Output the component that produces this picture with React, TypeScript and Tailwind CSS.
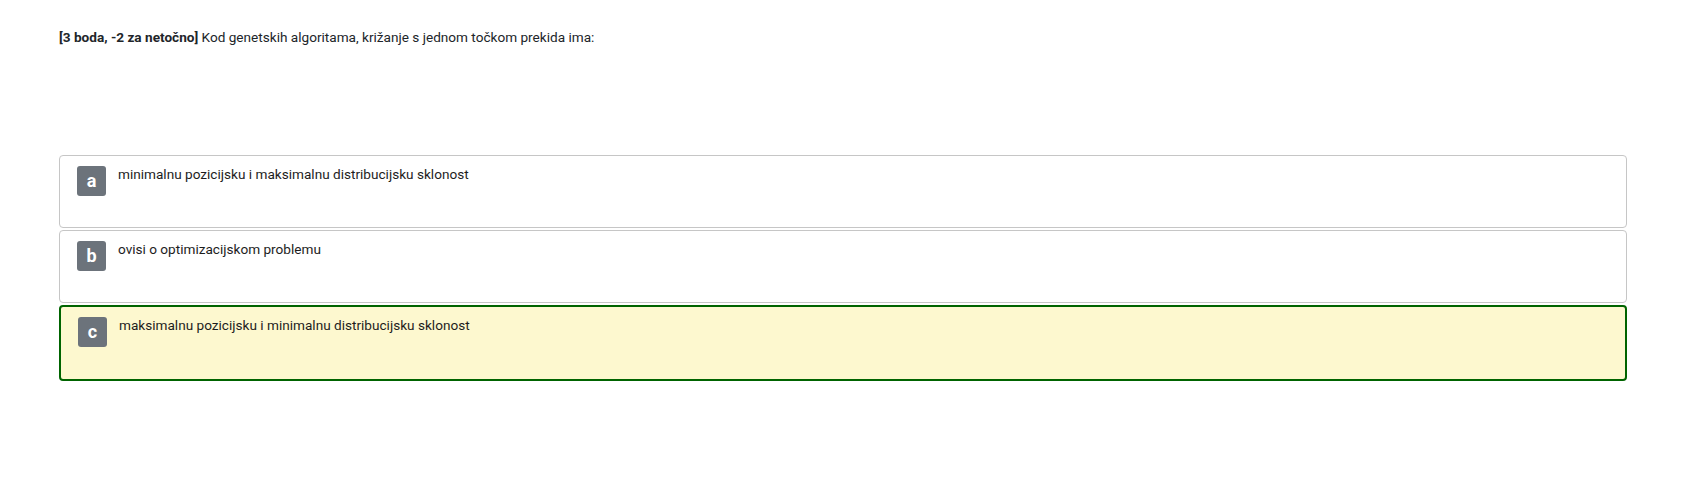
const options = [
  { letter: 'a', text: 'minimalnu pozicijsku i maksimalnu distribucijsku sklonost', selected: false },
  { letter: 'b', text: 'ovisi o optimizacijskom problemu', selected: false },
  { letter: 'c', text: 'maksimalnu pozicijsku i minimalnu distribucijsku sklonost', selected: true },
];

function Option({ letter, text, selected }: { letter: string; text: string; selected: boolean }) {
  return (
    <div
      className={
        selected
          ? 'flex h-[76px] items-start gap-3 rounded-[4px] border-2 border-[#006400] bg-[#fdf8cf] pl-[17px] pt-[10px]'
          : 'flex h-[73px] items-start gap-3 rounded-[4px] border border-[#c6c6c6] bg-white pl-[17px] pt-[10px]'
      }
    >
      <span className="flex h-[30px] w-[29px] shrink-0 items-center justify-center rounded-[3px] bg-[#6c737b] text-[18px] font-bold leading-none text-white">
        {letter}
      </span>
      <span className="-mt-[2px] text-[13.6px] leading-5 text-[#1d1d1d]">{text}</span>
    </div>
  );
}

export default function App() {
  return (
    <div className="min-h-[481px] bg-white pl-[59px] pr-[77px] pt-[27px] font-['Roboto',sans-serif] text-[#212529]">
      <p className="text-[13.6px] leading-5">
        <span className="font-bold">[3 boda, -2 za netočno]</span> Kod genetskih algoritama, križanje s jednom točkom prekida ima:
      </p>
      <div className="mt-[108px] flex flex-col gap-[2px]">
        {options.map(o => (
          <Option key={o.letter} {...o} />
        ))}
      </div>
    </div>
  );
}
